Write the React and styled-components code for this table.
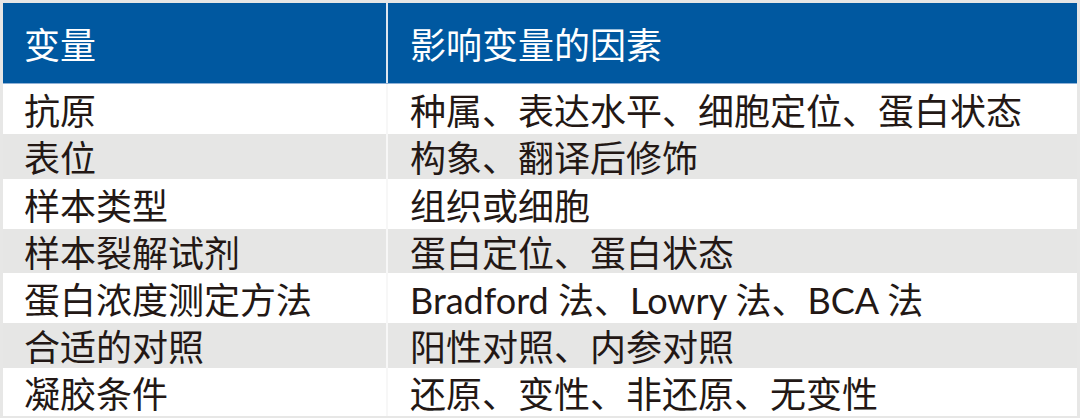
import styled, {createGlobalStyle} from "styled-components";

const GlobalStyle = createGlobalStyle`
  html, body {
    margin: 0;
    padding: 0;
    background: #ffffff;
  }
  * {
    box-sizing: border-box;
  }
`;

const Table = styled.div`
  width: 1080px;
  height: 418px;
  border: 3px solid #e7e7e6;
  border-bottom-width: 2px;
  display: flex;
  flex-direction: column;
  font-family: Lato, "Noto Sans CJK SC", sans-serif;
  color: #231815;
`;

const Row = styled.div`
  display: grid;
  grid-template-columns: 383px 689px;
  column-gap: 2px;
  height: ${p => p.$height}px;
  background: ${p => (p.$head ? "#dde6f0" : "#f7f7f7")};
  border-bottom: ${p => (p.$head ? "1px solid #8fb1d6" : "none")};
`;

const Cell = styled.div`
  display: flex;
  align-items: center;
  padding: 3px 0 0 22px;
  font-size: 36px;
  line-height: 1;
  white-space: nowrap;
  background: ${p => (p.$head ? "#0058a0" : p.$shade ? "#e6e6e5" : "#ffffff")};
  color: ${p => (p.$head ? "#ffffff" : "#231815")};

  &:first-child {
    padding-left: 21px;
  }
`;

const rows = [
    {name: "抗原", factors: "种属、表达水平、细胞定位、蛋白状态", height: 50},
    {name: "表位", factors: "构象、翻译后修饰", height: 45},
    {name: "样本类型", factors: "组织或细胞", height: 50},
    {name: "样本裂解试剂", factors: "蛋白定位、蛋白状态", height: 44},
    {name: "蛋白浓度测定方法", factors: "Bradford 法、Lowry 法、BCA 法", height: 50},
    {name: "合适的对照", factors: "阳性对照、内参对照", height: 45},
    {name: "凝胶条件", factors: "还原、变性、非还原、无变性", height: 48},
];

function App() {
    return (
        <>
            <GlobalStyle />
            <Table>
                <Row $head $height={81}>
                    <Cell $head>变量</Cell>
                    <Cell $head>影响变量的因素</Cell>
                </Row>
                {rows.map((r, i) => (
                    <Row key={r.name} $height={r.height}>
                        <Cell $shade={i % 2 === 1}>{r.name}</Cell>
                        <Cell $shade={i % 2 === 1}>{r.factors}</Cell>
                    </Row>
                ))}
            </Table>
        </>
    );
}

export default App;
